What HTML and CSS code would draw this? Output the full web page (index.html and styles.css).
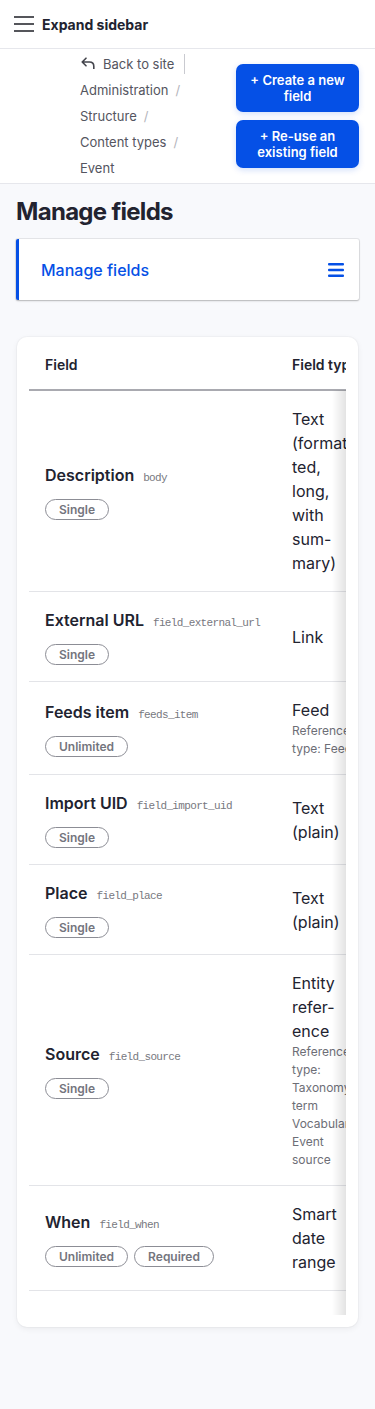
FILE: index.html
```html
<!DOCTYPE html>
<html lang="en">
<head>
<meta charset="utf-8">
<title>Manage fields</title>
<link rel="stylesheet" href="styles.css">
</head>
<body>
<header class="topbar">
  <svg class="burger" width="20" height="16" viewBox="0 0 20 16" aria-hidden="true">
    <rect x="0" y="0" width="20" height="2" fill="#55565b"/>
    <rect x="0" y="7" width="20" height="2" fill="#55565b"/>
    <rect x="0" y="14" width="20" height="2" fill="#55565b"/>
  </svg>
  <span class="expand">Expand sidebar</span>
</header>

<section class="toolbar">
  <nav class="crumbs">
    <div class="crumb back">
      <span class="back-inner">
        <svg width="14" height="12" viewBox="0 0 14 12" aria-hidden="true">
          <path d="M5 1.2 L1.2 5 L5 8.8 M1.2 5 H8.5 Q12.8 5 12.8 9.3 V12" fill="none" stroke="#44454d" stroke-width="1.6" stroke-linecap="round" stroke-linejoin="round"/>
        </svg>
        <span>Back to site</span>
      </span>
    </div>
    <div class="crumb">Administration<span class="sep">/</span></div>
    <div class="crumb">Structure<span class="sep">/</span></div>
    <div class="crumb">Content types<span class="sep">/</span></div>
    <div class="crumb">Event</div>
  </nav>
  <div class="actions">
    <a class="btn">+ Create a new field</a>
    <a class="btn">+ Re-use an existing field</a>
  </div>
</section>

<main class="content">
  <h1 class="title">Manage fields</h1>
  <div class="tabs">
    <span class="tab-label">Manage fields</span>
    <svg width="16" height="14" viewBox="0 0 16 14" aria-hidden="true">
      <rect x="0" y="0" width="16" height="2.6" rx="1" fill="#0550e6"/>
      <rect x="0" y="5.7" width="16" height="2.6" rx="1" fill="#0550e6"/>
      <rect x="0" y="11.4" width="16" height="2.6" rx="1" fill="#0550e6"/>
    </svg>
  </div>

  <div class="card">
    <div class="scroller">
      <table class="fields">
        <colgroup><col class="c1"><col class="c2"><col class="c3"></colgroup>
        <thead>
          <tr><th>Field</th><th>Field type</th><th>Operations</th></tr>
        </thead>
        <tbody>
          <tr>
            <td><div class="nm"><span class="label">Description</span><code>body</code></div>
              <div class="badges"><span class="badge">Single</span></div></td>
            <td><div class="type">Text<br>(format-<br>ted,<br>long,<br>with<br>sum-<br>mary)</div></td>
            <td></td>
          </tr>
          <tr>
            <td><div class="nm"><span class="label">External URL</span><code>field_external_url</code></div>
              <div class="badges"><span class="badge">Single</span></div></td>
            <td><div class="type">Link</div></td>
            <td></td>
          </tr>
          <tr>
            <td><div class="nm"><span class="label">Feeds item</span><code>feeds_item</code></div>
              <div class="badges"><span class="badge">Unlimited</span></div></td>
            <td><div class="type">Feed</div><div class="desc">Reference<br>type: Feed</div></td>
            <td></td>
          </tr>
          <tr>
            <td><div class="nm"><span class="label">Import UID</span><code>field_import_uid</code></div>
              <div class="badges"><span class="badge">Single</span></div></td>
            <td><div class="type">Text<br>(plain)</div></td>
            <td></td>
          </tr>
          <tr>
            <td><div class="nm"><span class="label">Place</span><code>field_place</code></div>
              <div class="badges"><span class="badge">Single</span></div></td>
            <td><div class="type">Text<br>(plain)</div></td>
            <td></td>
          </tr>
          <tr>
            <td><div class="nm"><span class="label">Source</span><code>field_source</code></div>
              <div class="badges"><span class="badge">Single</span></div></td>
            <td><div class="type">Entity<br>refer-<br>ence</div><div class="desc">Reference<br>type:<br>Taxonomy<br>term<br>Vocabulary:<br>Event<br>source</div></td>
            <td></td>
          </tr>
          <tr>
            <td><div class="nm"><span class="label">When</span><code>field_when</code></div>
              <div class="badges"><span class="badge">Unlimited</span><span class="badge">Required</span></div></td>
            <td><div class="type">Smart<br>date<br>range</div></td>
            <td></td>
          </tr>
        </tbody>
      </table>
      <div class="edge-shadow"></div>
    </div>
  </div>
</main>
</body>
</html>
```

FILE: styles.css
```css
* { box-sizing: border-box; }

html, body {
  margin: 0;
  padding: 0;
}

body {
  font-family: Inter, "Noto Sans", "Liberation Sans", sans-serif;
  background: #f8f9fc;
  color: #222330;
  min-height: 1409px;
}

.topbar {
  height: 49px;
  background: #fff;
  border-bottom: 1px solid #e6e7ec;
  display: flex;
  align-items: center;
  padding-left: 14px;
  gap: 8px;
}

.burger { display: block; }

.expand {
  font-size: 14px;
  font-weight: 700;
  color: #222330;
}

.toolbar {
  background: #fff;
  border-bottom: 1px solid #e6e7ec;
  display: flex;
  align-items: center;
  padding: 2px 16px 2px 80px;
}

.crumbs {
  display: flex;
  flex-direction: column;
  font-size: 13px;
  color: #545560;
}

.crumb {
  height: 26px;
  line-height: 26px;
  white-space: nowrap;
}

.crumb .sep {
  color: #b4b5bc;
  margin-left: 7px;
}

.back {
  display: flex;
  align-items: center;
}

.back-inner {
  display: flex;
  align-items: center;
  gap: 8px;
  height: 20px;
  padding-right: 10px;
  border-right: 1px solid #c9cad0;
  margin-left: 1px;
}

.back-inner svg { display: block; margin-top: -2px; }

.actions {
  margin-left: auto;
  width: 123px;
  display: flex;
  flex-direction: column;
  gap: 8px;
}

.btn {
  display: block;
  background: #0550e6;
  color: #fff;
  border-radius: 7px;
  padding: 8px 10px;
  font-size: 13px;
  font-weight: 600;
  line-height: 16px;
  text-align: center;
  box-shadow: 0 2px 6px rgba(5, 80, 230, 0.18);
}

.content {
  padding: 0 16px;
}

.title {
  margin: 12px 0 11px;
  font-size: 24px;
  line-height: 32px;
  font-weight: 700;
  letter-spacing: -0.7px;
  color: #222330;
}

.tabs {
  background: #fff;
  border-left: 3px solid #0550e6;
  border-radius: 2px;
  box-shadow: 0 0 0 1px rgba(0, 0, 0, 0.07), 0 1px 2px rgba(0, 0, 0, 0.22);
  height: 61px;
  display: flex;
  align-items: center;
  justify-content: space-between;
  padding: 0 15px 0 22px;
}

.tabs svg { display: block; }

.tab-label {
  color: #0550e6;
  font-size: 16px;
  font-weight: 500;
}

.card {
  margin: 37px 1px 0 1px;
  background: #fff;
  border-radius: 10px;
  box-shadow: 0 0 0 1px rgba(0, 0, 0, 0.025), 0 2px 6px rgba(0, 0, 0, 0.06);
  padding: 0 12px 12px;
}

.scroller {
  position: relative;
  overflow: hidden;
  padding-bottom: 24px;
}

.fields {
  table-layout: fixed;
  width: 520px;
  border-collapse: collapse;
}

.c1 { width: 247px; }
.c2 { width: 130px; }
.c3 { width: 143px; }

.fields th {
  text-align: left;
  font-size: 14px;
  font-weight: 600;
  line-height: 20px;
  padding: 18px 16px 14px;
  border-bottom: 2px solid #a9aab0;
  white-space: nowrap;
  color: #222330;
}

.fields td {
  padding: 16px;
  vertical-align: middle;
  border-bottom: 1px solid #e3e4e8;
}

.nm {
  display: flex;
  align-items: baseline;
  gap: 9px;
  height: 24px;
  line-height: 24px;
  white-space: nowrap;
}

.label {
  font-size: 16px;
  font-weight: 600;
  line-height: 24px;
  color: #222330;
}

code {
  font-family: "Liberation Mono", "DejaVu Sans Mono", monospace;
  font-size: 11px;
  line-height: 14px;
  letter-spacing: -0.65px;
  color: #777880;
}

.badges {
  display: flex;
  gap: 6px;
  margin-top: 12px;
  height: 21px;
}

.badge {
  display: block;
  font-size: 12px;
  font-weight: 600;
  line-height: 15px;
  height: 21px;
  padding: 2px 13px;
  border: 1px solid #8c8d95;
  border-radius: 999px;
  color: #74757d;
}

.type {
  font-size: 16px;
  line-height: 24px;
  white-space: nowrap;
  color: #222330;
}

.desc {
  font-size: 12px;
  line-height: 18px;
  white-space: nowrap;
  color: #6d6e76;
}

.edge-shadow {
  position: absolute;
  top: 53px;
  right: 0;
  bottom: 0;
  width: 14px;
  background: linear-gradient(to right, rgba(0, 0, 0, 0), rgba(0, 0, 0, 0.11));
}
```
